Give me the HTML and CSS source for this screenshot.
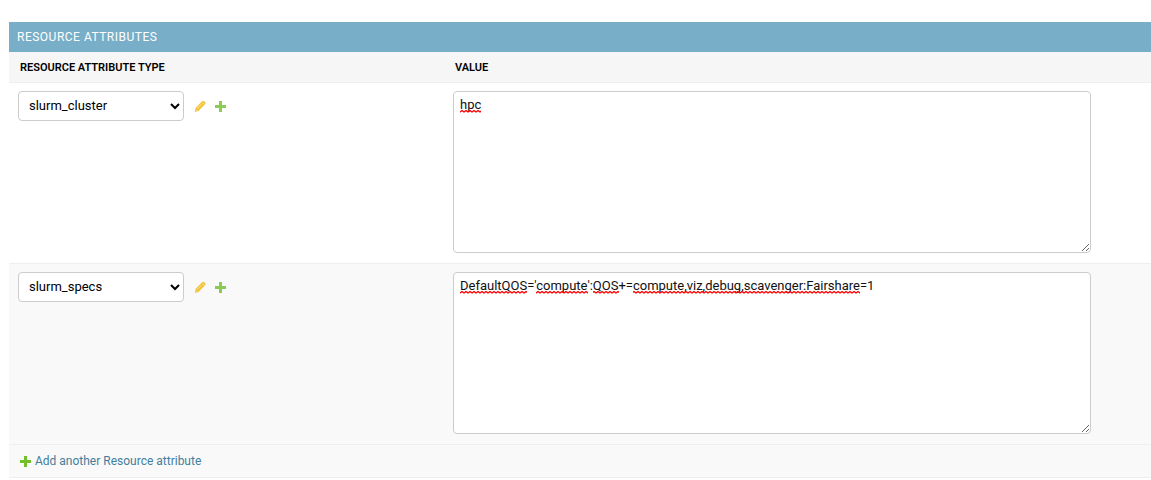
FILE: index.html
```html
<!DOCTYPE html>
<html lang="en">
<head>
    <meta charset="UTF-8">
    <meta name="viewport" content="width=device-width, initial-scale=1.0">
    <title>Resource attributes</title>
    <link rel="stylesheet" href="styles.css">
</head>
<body>
    <svg class="defs" aria-hidden="true">
        <defs>
            <pattern id="squiggle" width="4" height="3" patternUnits="userSpaceOnUse">
                <path d="M-1 1.5 L0 2 L2 .5 L4 2 L5 1.5" fill="none" stroke="#f00" stroke-width="1.3"/>
            </pattern>
            <symbol id="pencil" viewBox="0 0 12 12">
                <path d="M.8 11.9 L1.5 7.9 L8.1 1.3 Q9.2 .2 10.3 1.3 L11 2 Q12.1 3.1 11 4.2 L4.5 11 Z" fill="#efb80b"/>
                <path d="M3.1 8.5 L7.6 4 M8.2 2.4 L10 4.2 M1.6 9.5 L3.1 11" fill="none" stroke="#fff" stroke-opacity=".6" stroke-width=".8"/>
            </symbol>
            <symbol id="plus" viewBox="0 0 11 11">
                <path d="M4 0 H7 V4 H11 V7 H7 V11 H4 V7 H0 V4 H4 Z" fill="#70bf2b"/>
            </symbol>
        </defs>
    </svg>
    <form class="module">
        <h2>Resource attributes</h2>
        <table>
            <thead>
                <tr>
                    <th class="col-type" id="type-head" scope="col">Resource attribute type</th>
                    <th id="value-head" scope="col">Value</th>
                </tr>
            </thead>
            <tbody>
                <tr>
                    <td>
                        <div class="related-widget">
                            <select aria-labelledby="type-head">
                                <option selected>slurm_cluster</option>
                            </select>
                            <a href="#" aria-label="Change selected type"><svg class="pencil"><use href="#pencil"/></svg></a>
                            <a href="#" aria-label="Add another type"><svg class="plus"><use href="#plus"/></svg></a>
                        </div>
                    </td>
                    <td>
                        <div class="value-field">
                            <textarea aria-labelledby="value-head">hpc</textarea>
                            <svg class="spelling" aria-hidden="true">
                                <rect width="21" height="3" fill="url(#squiggle)"/>
                            </svg>
                        </div>
                    </td>
                </tr>
                <tr class="row2">
                    <td>
                        <div class="related-widget">
                            <select aria-labelledby="type-head">
                                <option selected>slurm_specs</option>
                            </select>
                            <a href="#" aria-label="Change selected type"><svg class="pencil"><use href="#pencil"/></svg></a>
                            <a href="#" aria-label="Add another type"><svg class="plus"><use href="#plus"/></svg></a>
                        </div>
                    </td>
                    <td>
                        <div class="value-field">
                            <textarea aria-labelledby="value-head">DefaultQOS='compute':QOS+=compute,viz,debug,scavenger:Fairshare=1</textarea>
                            <svg class="spelling" aria-hidden="true">
                                <rect width="67" height="3" fill="url(#squiggle)"/>
                                <rect x="76" width="52" height="3" fill="url(#squiggle)"/>
                                <rect x="133" width="26" height="3" fill="url(#squiggle)"/>
                                <rect x="173" width="227" height="3" fill="url(#squiggle)"/>
                            </svg>
                        </div>
                    </td>
                </tr>
                <tr class="add-row">
                    <td colspan="2">
                        <a href="#"><svg class="plus"><use href="#plus"/></svg>Add another Resource attribute</a>
                    </td>
                </tr>
            </tbody>
        </table>
    </form>
</body>
</html>
```
FILE: styles.css
```css
body {
    margin: 0;
    padding: 22px 0 0 9px;
    background: #fff;
    color: #333;
    font-family: Roboto, "Liberation Sans", sans-serif;
    font-size: 13px;
}
.defs {
    position: absolute;
    width: 0;
    height: 0;
}
h2 {
    margin: 0;
    padding: 7px 8px;
    background: #79aec8;
    color: #fff;
    font-size: 12px;
    font-weight: 400;
    line-height: 16px;
    letter-spacing: 0.5px;
    text-transform: uppercase;
}
table {
    width: 100%;
    border-collapse: separate;
    border-spacing: 0;
    table-layout: fixed;
}
th {
    padding: 8px 11px 6px;
    background: #f6f6f6;
    border-bottom: 1px solid #eee;
    color: #000;
    font-size: 11px;
    font-weight: 600;
    line-height: 16px;
    text-align: left;
    text-transform: uppercase;
}
.col-type {
    width: 413px;
}
td {
    padding: 8px 9px 10px;
    border-bottom: 1px solid #eee;
    vertical-align: top;
}
.row2 td,
.add-row td {
    background: #f9f9f9;
}
.related-widget {
    display: flex;
    align-items: center;
    gap: 9px;
}
.related-widget a {
    display: flex;
    opacity: 0.8;
}
.related-widget select {
    margin-right: 1px;
}
select {
    box-sizing: border-box;
    width: 166px;
    height: 30px;
    padding: 0 6px 1px;
    border: 1px solid #ccc;
    border-radius: 4px;
    background: #fff;
    color: #000;
    font: inherit;
}
.pencil {
    width: 12px;
    height: 12px;
}
.plus {
    width: 11px;
    height: 11px;
}
.value-field {
    position: relative;
    max-width: 638px;
}
textarea {
    display: block;
    box-sizing: border-box;
    width: 100%;
    height: 162px;
    padding: 5px 6px;
    border: 1px solid #ccc;
    border-radius: 4px;
    background: #fff;
    color: #111;
    font: inherit;
    line-height: 16px;
}
/* spell check underline, lies over the first line of the textarea */
.spelling {
    position: absolute;
    top: 19px;
    left: 7px;
    width: 400px;
    height: 3px;
    pointer-events: none;
}
.add-row td {
    padding: 8px 11px;
    line-height: 16px;
}
.add-row a {
    display: flex;
    align-items: center;
    gap: 4px;
    color: #447e9b;
    font-size: 12px;
    text-decoration: none;
}
```
